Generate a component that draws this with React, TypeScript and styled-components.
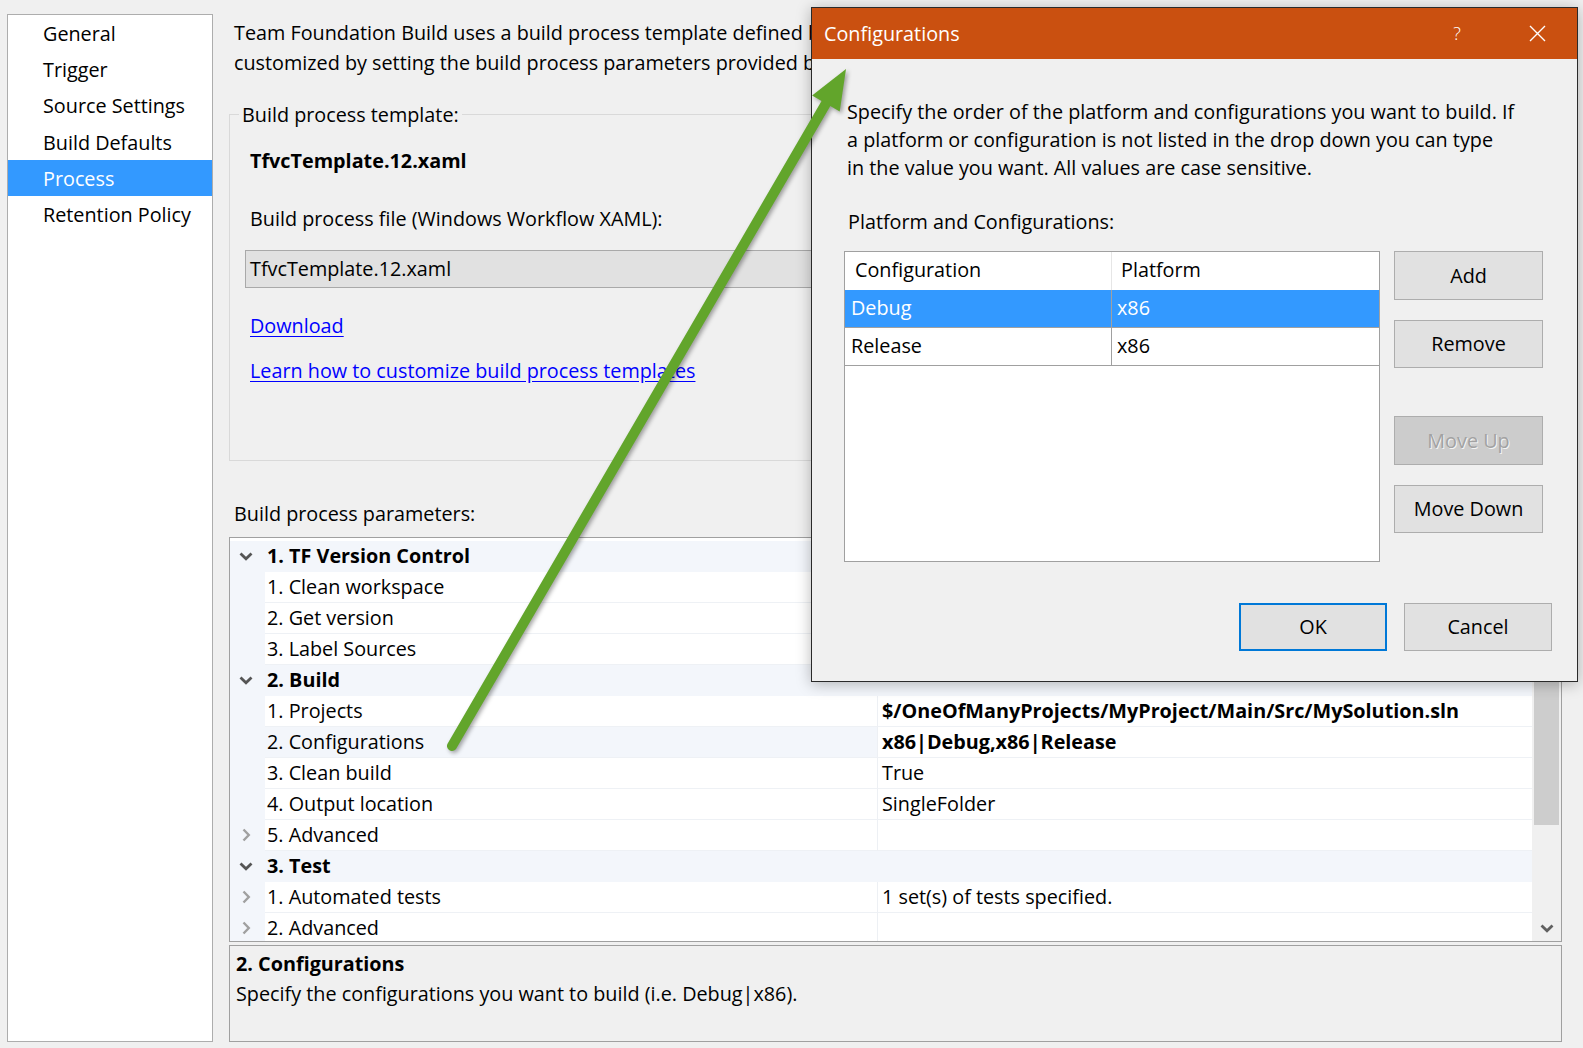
import React from "react";
import styled, { createGlobalStyle, css } from "styled-components";

const GlobalStyle = createGlobalStyle`
  html, body { margin: 0; padding: 0; background: #f0f0f0; }
  body {
    font-family: "Open Sans", "Noto Sans", sans-serif;
    font-size: 19.8px;
    color: #000;
  }
  #root { width: 1583px; height: 1048px; position: relative; overflow: hidden; }
  * { box-sizing: border-box; }
`;

const Page = styled.div`
  display: flex;
  gap: 16px;
  height: 1048px;
  padding: 14px 21px 6px 7px;
`;

const NavPanel = styled.nav`
  width: 206px;
  background: #fff;
  border: 1px solid #adadad;
  display: flex;
  flex-direction: column;
`;

const NavItem = styled.div<{ $active?: boolean }>`
  height: 36.2px;
  line-height: 38px;
  padding-left: 35px;
  white-space: nowrap;
  ${(p) =>
    p.$active &&
    css`
      background: #3399ff;
      color: #fff;
    `}
`;

const Main = styled.main`
  flex: 1;
  display: flex;
  flex-direction: column;
  min-width: 0;
`;

const Intro = styled.div`
  margin-top: 4px;
  padding-left: 5px;
  line-height: 30.3px;
  white-space: nowrap;
`;

const GroupBox = styled.fieldset`
  margin: 23px 0 0 0;
  padding: 0 20px 74px 20px;
  border: 1px solid #d9d9d9;
  min-width: 0;
`;

const Legend = styled.legend`
  margin-left: -11px;
  padding: 0 3px;
  line-height: 26px;
`;

const TemplateName = styled.div`
  margin-top: 18px;
  font-weight: 700;
  line-height: 30.3px;
`;

const FieldLabel = styled.div`
  margin-top: 28px;
  line-height: 30.3px;
`;

const TextBox = styled.div`
  margin: 16px 0 0 -5px;
  height: 37.5px;
  line-height: 35px;
  padding-left: 4px;
  background: #e1e1e1;
  border: 1px solid #a9a9a9;
  white-space: nowrap;
`;

const Link = styled.a<{ $gap: number }>`
  display: block;
  width: max-content;
  margin-top: ${(p) => p.$gap}px;
  line-height: 30px;
  color: #0000ff;
  text-decoration: underline;
  text-underline-offset: 3px;
  cursor: pointer;
`;

const SectionLabel = styled.div`
  margin-top: 38px;
  padding-left: 5px;
  line-height: 30px;
`;

const ParamGrid = styled.div`
  margin-top: 8px;
  height: 405px;
  border: 1px solid #a0a0a0;
  background: #fff;
  display: flex;
  overflow: hidden;
`;

const Rows = styled.div`
  flex: 1;
  padding-top: 3px;
  overflow: hidden;
`;

const RowBase = styled.div<{ $group?: boolean }>`
  display: grid;
  grid-template-columns: ${(p) => (p.$group ? "35px 1fr" : "35px 613px 1fr")};
  height: 31px;
  line-height: 30px;
  white-space: nowrap;
  background: ${(p) => (p.$group ? "#f3f6fb" : "#fff")};
  font-weight: ${(p) => (p.$group ? 700 : 400)};
`;

const Gutter = styled.div`
  background: #f3f6fb;
  display: flex;
  align-items: center;
  justify-content: center;
  padding-right: 3px;
`;

const NameCell = styled.div<{ $selected?: boolean }>`
  padding-left: 2px;
  border-bottom: 1px solid #eef1f5;
  border-right: 1px solid #edf0f4;
  background: ${(p) => (p.$selected ? "#f3f6fb" : "#fff")};
  overflow: hidden;
`;

const GroupCell = styled.div`
  padding-left: 2px;
`;

const ValueCell = styled.div<{ $bold?: boolean }>`
  padding-left: 4px;
  border-bottom: 1px solid #eef1f5;
  font-weight: ${(p) => (p.$bold ? 700 : 400)};
  overflow: hidden;
`;

const ScrollBar = styled.div`
  width: 29px;
  background: #f0f0f0;
  display: flex;
  flex-direction: column;
  align-items: center;
  padding: 2px 2px 8px;
`;

const Thumb = styled.div`
  width: 25px;
  height: 285px;
  background: #cdcdcd;
`;

const ScrollArrow = styled.div`
  margin-top: auto;
  display: flex;
`;

const DescBox = styled.div`
  margin-top: 3px;
  flex: 1;
  border: 1px solid #a0a0a0;
  background: #f0f0f0;
  padding: 3px 6px;
  line-height: 30px;
`;

const DescTitle = styled.div`
  font-weight: 700;
`;

const DescText = styled.div``;

/* Dialog */

const Dialog = styled.div`
  position: absolute;
  left: 811px;
  top: 7px;
  width: 767px;
  height: 675px;
  background: #f0f0f0;
  border: 1px solid #2a2a2a;
  box-shadow: 0 2px 14px rgba(0, 0, 0, 0.28);
  display: flex;
  flex-direction: column;
  z-index: 5;
`;

const TitleBar = styled.div`
  height: 50.5px;
  background: #ca5010;
  color: #fff;
  display: flex;
  align-items: center;
  padding-left: 12px;
`;

const TitleText = styled.div`
  flex: 1;
`;

const TitleButton = styled.div`
  width: 80px;
  height: 50px;
  display: flex;
  align-items: center;
  justify-content: center;
  font-size: 18px;
  font-weight: 300;
`;

const DialogBody = styled.div`
  flex: 1;
  display: flex;
  flex-direction: column;
  padding: 0 25px 0 32px;
`;

const DialogText = styled.p`
  margin: 39.5px 0 0;
  padding-left: 3px;
  line-height: 27.8px;
  white-space: nowrap;
`;

const DialogLabel = styled.div`
  margin-top: 26.5px;
  padding-left: 4px;
  line-height: 27.8px;
`;

const DialogContent = styled.div`
  margin-top: 15.5px;
  display: flex;
  gap: 14px;
`;

const Table = styled.div`
  width: 536px;
  height: 311px;
  background: #fff;
  border: 1px solid #a0a0a0;
  display: flex;
  flex-direction: column;
`;

const TableRow = styled.div<{ $header?: boolean; $selected?: boolean }>`
  display: grid;
  grid-template-columns: 267px 1fr;
  height: ${(p) => (p.$header ? "37.5px" : "38px")};
  line-height: 36px;
  background: ${(p) => (p.$selected ? "#3399ff" : "#fff")};
  color: ${(p) => (p.$selected ? "#fff" : "#000")};
  border-bottom: ${(p) => (p.$header ? "none" : "1px solid #a0a0a0")};
`;

const TableCell = styled.div<{ $header?: boolean; $first?: boolean }>`
  padding-left: ${(p) => (p.$header ? (p.$first ? "10px" : "9px") : p.$first ? "6px" : "5px")};
  border-right: ${(p) => (p.$first ? (p.$header ? "1px solid #e6e6e6" : "1px solid #a0a0a0") : "none")};
  white-space: nowrap;
`;

const ButtonColumn = styled.div`
  display: flex;
  flex-direction: column;
`;

const Button = styled.div<{ $gap?: number; $disabled?: boolean; $primary?: boolean }>`
  width: 149px;
  height: 48.5px;
  margin-top: ${(p) => p.$gap ?? 0}px;
  display: flex;
  align-items: center;
  justify-content: center;
  background: ${(p) => (p.$disabled ? "#cccccc" : "#e1e1e1")};
  color: ${(p) => (p.$disabled ? "#a2a2a2" : "#000")};
  text-shadow: ${(p) => (p.$disabled ? "1px 1px 0 #f4f4f4" : "none")};
  border: ${(p) => (p.$primary ? "2px solid #0078d7" : "1px solid #adadad")};
`;

const Footer = styled.div`
  margin-top: 40.5px;
  display: flex;
  justify-content: flex-end;
  gap: 17px;
`;

const FooterButton = styled(Button)`
  width: 148px;
`;

const ArrowLayer = styled.svg`
  position: absolute;
  left: 0;
  top: 0;
  z-index: 10;
  pointer-events: none;
  filter: drop-shadow(2px 2px 2px rgba(0, 0, 0, 0.35));
`;

const ChevronDown = ({ color = "#555" }: { color?: string }) => (
  <svg width="14" height="9" viewBox="0 0 14 9">
    <path d="M1.5 1.5 L7 6.8 L12.5 1.5" fill="none" stroke={color} strokeWidth="2.8" />
  </svg>
);

const ChevronRight = () => (
  <svg width="9" height="14" viewBox="0 0 9 14">
    <path d="M1.5 1.5 L6.8 7 L1.5 12.5" fill="none" stroke="#a0a0a0" strokeWidth="2.4" />
  </svg>
);

type Row = {
  group?: boolean;
  label: string;
  value?: string;
  bold?: boolean;
  collapsed?: boolean;
  selected?: boolean;
};

const rows: Row[] = [
  { group: true, label: "1. TF Version Control" },
  { label: "1. Clean workspace", value: "All" },
  { label: "2. Get version", value: "" },
  { label: "3. Label Sources", value: "True" },
  { group: true, label: "2. Build" },
  { label: "1. Projects", value: "$/OneOfManyProjects/MyProject/Main/Src/MySolution.sln", bold: true },
  { label: "2. Configurations", value: "x86|Debug,x86|Release", bold: true, selected: true },
  { label: "3. Clean build", value: "True" },
  { label: "4. Output location", value: "SingleFolder" },
  { label: "5. Advanced", value: "", collapsed: true },
  { group: true, label: "3. Test" },
  { label: "1. Automated tests", value: "1 set(s) of tests specified.", collapsed: true },
  { label: "2. Advanced", value: "", collapsed: true },
  { group: true, label: "4. Publish Symbols" },
];

const navItems = ["General", "Trigger", "Source Settings", "Build Defaults", "Process", "Retention Policy"];

// arrow geometry
const tail = { x: 452, y: 746 };
const tip = { x: 846, y: 69 };
const dx = tip.x - tail.x;
const dy = tip.y - tail.y;
const len = Math.hypot(dx, dy);
const ux = dx / len;
const uy = dy / len;
const nx = -uy;
const ny = ux;
const headLen = 40;
const headHalf = 16;
const bx = tip.x - ux * headLen;
const by = tip.y - uy * headLen;
const headPts = `${tip.x},${tip.y} ${bx + nx * headHalf},${by + ny * headHalf} ${bx - nx * headHalf},${by - ny * headHalf}`;

export default function App() {
  return (
    <>
      <GlobalStyle />
      <Page>
        <NavPanel>
          {navItems.map((n) => (
            <NavItem key={n} $active={n === "Process"}>
              {n}
            </NavItem>
          ))}
        </NavPanel>
        <Main>
          <Intro>
            Team Foundation Build uses a build process template defined by a Windows Workflow (XAML) file. The
            behavior of this template can be
            <br />
            customized by setting the build process parameters provided by the selected template.
          </Intro>
          <GroupBox>
            <Legend>Build process template:</Legend>
            <TemplateName>TfvcTemplate.12.xaml</TemplateName>
            <FieldLabel>Build process file (Windows Workflow XAML):</FieldLabel>
            <TextBox>TfvcTemplate.12.xaml</TextBox>
            <Link $gap={23}>Download</Link>
            <Link $gap={15}>Learn how to customize build process templates</Link>
          </GroupBox>
          <SectionLabel>Build process parameters:</SectionLabel>
          <ParamGrid>
            <Rows>
              {rows.map((r, i) =>
                r.group ? (
                  <RowBase key={i} $group>
                    <Gutter>
                      <ChevronDown />
                    </Gutter>
                    <GroupCell>{r.label}</GroupCell>
                  </RowBase>
                ) : (
                  <RowBase key={i}>
                    <Gutter>{r.collapsed && <ChevronRight />}</Gutter>
                    <NameCell $selected={r.selected}>{r.label}</NameCell>
                    <ValueCell $bold={r.bold}>{r.value}</ValueCell>
                  </RowBase>
                )
              )}
            </Rows>
            <ScrollBar>
              <Thumb />
              <ScrollArrow>
                <ChevronDown color="#606060" />
              </ScrollArrow>
            </ScrollBar>
          </ParamGrid>
          <DescBox>
            <DescTitle>2. Configurations</DescTitle>
            <DescText>Specify the configurations you want to build (i.e. Debug|x86).</DescText>
          </DescBox>
        </Main>
      </Page>

      <Dialog>
        <TitleBar>
          <TitleText>Configurations</TitleText>
          <TitleButton>?</TitleButton>
          <TitleButton>
            <svg width="17" height="17" viewBox="0 0 17 17">
              <path d="M1 1 L16 16 M16 1 L1 16" stroke="#fff" strokeWidth="1.4" />
            </svg>
          </TitleButton>
        </TitleBar>
        <DialogBody>
          <DialogText>
            Specify the order of the platform and configurations you want to build. If
            <br />
            a platform or configuration is not listed in the drop down you can type
            <br />
            in the value you want. All values are case sensitive.
          </DialogText>
          <DialogLabel>Platform and Configurations:</DialogLabel>
          <DialogContent>
            <Table>
              <TableRow $header>
                <TableCell $header $first>
                  Configuration
                </TableCell>
                <TableCell $header>Platform</TableCell>
              </TableRow>
              <TableRow $selected>
                <TableCell $first>Debug</TableCell>
                <TableCell>x86</TableCell>
              </TableRow>
              <TableRow>
                <TableCell $first>Release</TableCell>
                <TableCell>x86</TableCell>
              </TableRow>
            </Table>
            <ButtonColumn>
              <Button>Add</Button>
              <Button $gap={20}>Remove</Button>
              <Button $gap={48} $disabled>
                Move Up
              </Button>
              <Button $gap={20}>Move Down</Button>
            </ButtonColumn>
          </DialogContent>
          <Footer>
            <FooterButton $primary>OK</FooterButton>
            <FooterButton>Cancel</FooterButton>
          </Footer>
        </DialogBody>
      </Dialog>

      <ArrowLayer width="1583" height="1048" viewBox="0 0 1583 1048">
        <line
          x1={tail.x}
          y1={tail.y}
          x2={bx + ux * 4}
          y2={by + uy * 4}
          stroke="#62a52b"
          strokeWidth="10"
          strokeLinecap="round"
        />
        <polygon points={headPts} fill="#62a52b" />
      </ArrowLayer>
    </>
  );
}
